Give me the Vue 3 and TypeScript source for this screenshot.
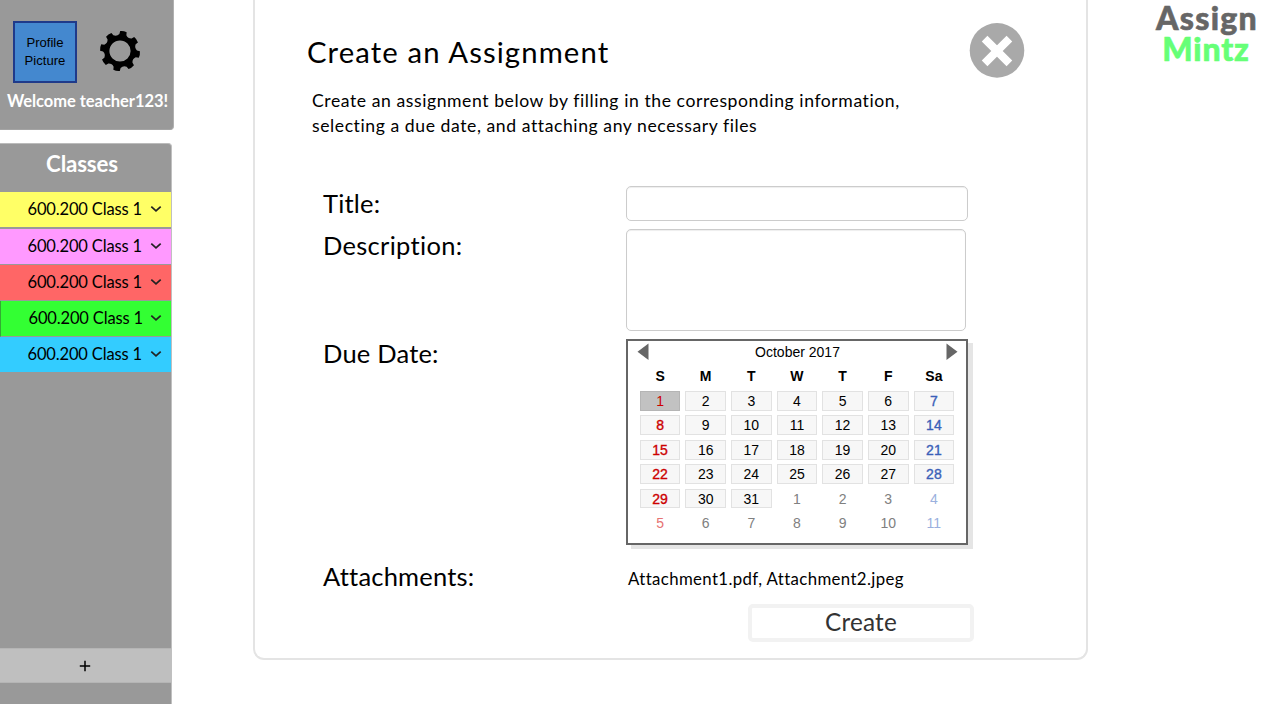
<script setup lang="ts">
interface ClassItem { name: string; tone: string }
interface Day { label: number; kind: string }

const classes: ClassItem[] = [
  { name: '600.200 Class 1', tone: 'yellow' },
  { name: '600.200 Class 1', tone: 'pink' },
  { name: '600.200 Class 1', tone: 'red' },
  { name: '600.200 Class 1', tone: 'green' },
  { name: '600.200 Class 1', tone: 'blue' },
]

const weekdays: string[] = ['S', 'M', 'T', 'W', 'T', 'F', 'Sa']

const days: Day[] = Array.from({ length: 42 }, (_, i) => {
  const inMonth = i < 31
  const col = i % 7
  const kinds: string[] = [inMonth ? 'current' : 'next']
  if (col === 0) kinds.push('sunday')
  if (col === 6) kinds.push('saturday')
  if (i === 0) kinds.push('selected')
  return { label: inMonth ? i + 1 : i - 30, kind: kinds.join(' ') }
})

// Gear outline: eight slightly flared teeth around a ring
const gearPath: string = (() => {
  const pts: string[] = []
  for (let i = 0; i < 8; i++) {
    const base = (i * 45 + 10) * (Math.PI / 180)
    const at = (r: number, deg: number) => {
      const a = base + deg * (Math.PI / 180)
      return `${(21 + r * Math.sin(a)).toFixed(2)} ${(21 - r * Math.cos(a)).toFixed(2)}`
    }
    pts.push(`${i ? 'L' : 'M'}${at(17, -12)} L${at(19.9, -9.5)} Q${at(20.6, 0)} ${at(19.9, 9.5)} L${at(17, 12)} Q${at(14.6, 22.5)} ${at(17, 33)}`)
  }
  return pts.join(' ') + ' Z M21 10.4 a10.6 10.6 0 1 0 0 21.2 a10.6 10.6 0 1 0 0 -21.2 Z'
})()
</script>

<template>
  <div class="page">
    <aside class="sidebar">
      <section class="profile">
        <div class="profile-top">
          <div class="avatar">Profile<br />Picture</div>
          <svg class="gear" viewBox="0 0 42 42"><path :d="gearPath" fill="#000" fill-rule="evenodd" /></svg>
        </div>
        <div class="welcome"><span>Welcome teacher123!</span></div>
      </section>
      <section class="classes">
        <h2>Classes</h2>
        <ul>
          <li v-for="(c, i) in classes" :key="i" :class="c.tone">
            <span>{{ c.name }}</span>
            <svg viewBox="0 0 12 8"><path d="M1.3 1.6 L6 5.9 L10.7 1.6" fill="none" stroke="#222" stroke-width="1.7" /></svg>
          </li>
        </ul>
        <button class="add" aria-label="Add class">
          <svg viewBox="0 0 12 12"><path d="M6 .8V11.2M.8 6H11.2" stroke="#000" stroke-width="1.5" /></svg>
        </button>
      </section>
    </aside>

    <main class="panel">
      <header>
        <h1>Create an Assignment</h1>
        <svg class="close" viewBox="0 0 56 56">
          <circle cx="28" cy="28.4" r="27.3" fill="#a9a9a9" />
          <path d="M15.6 16.6 L40.4 41.4 M40.4 16.6 L15.6 41.4" stroke="#fff" stroke-width="8" />
        </svg>
      </header>
      <div class="intro">
        <div class="line-a">Create an assignment below by filling in the corresponding information,</div>
        <div class="line-b">selecting a due date, and attaching any necessary files</div>
      </div>
      <form @submit.prevent>
        <label class="l-title">Title:</label>
        <input class="title-input" type="text" />
        <label class="l-desc">Description:</label>
        <textarea></textarea>
        <label class="l-due">Due Date:</label>
        <div class="calendar">
          <div class="month">
            <svg viewBox="0 0 12 18"><path d="M11.5 .5V17L.5 8.7Z" fill="#666" /></svg>
            <span>October 2017</span>
            <svg viewBox="0 0 12 18"><path d="M.5 .5V17L11.5 8.7Z" fill="#666" /></svg>
          </div>
          <div class="weekdays"><span v-for="(w, i) in weekdays" :key="i">{{ w }}</span></div>
          <div class="days"><span v-for="(d, i) in days" :key="i" :class="d.kind">{{ d.label }}</span></div>
        </div>
        <label class="l-att">Attachments:</label>
        <div class="files"><span>Attachment1.pdf, Attachment2.jpeg</span></div>
        <button class="create"><span>Create</span></button>
      </form>
    </main>

    <div class="logo">
      <div class="assign">Assign</div>
      <div class="mintz">Mintz</div>
    </div>
  </div>
</template>

<style>
html, body { overflow: hidden; background: #fff; }
</style>

<style scoped>
* { box-sizing: border-box; }
.page {
  display: flex;
  width: 1267px;
  height: 704px;
  font-family: Lato, "Open Sans", sans-serif;
  color: #000;
  white-space: nowrap;
}
.sidebar { width: 174px; margin-right: 79px; display: flex; flex-direction: column; gap: 13px; flex: none; }
.profile {
  height: 130px;
  padding: 21px 0 0 13px;
  background: #999;
  border-right: 1px solid #b0b0b0;
  border-bottom: 1px solid #a4a4a4;
  border-radius: 0 0 4px 0;
  flex: none;
}
.profile-top { display: flex; height: 62px; }
.avatar {
  width: 64px;
  height: 62px;
  border: 2px solid #1f3a8a;
  background: #4488cf;
  font: 13.1px/18px "Liberation Sans", Arial, sans-serif;
  text-align: center;
  padding-top: 11px;
}
.gear { width: 42px; height: 42px; margin: 9px 0 0 22px; }
.welcome { margin: 6px 0 0 -6px; font-size: 16.5px; line-height: 24px; font-weight: 700; color: #fff; letter-spacing: -0.05px; }
.classes { width: 172px; height: 561px; background: #999; border-right: 1px solid #c0c0c0; border-top: 1px solid #bbb; border-radius: 0 4px 0 0; display: flex; flex-direction: column; }
h2 { margin: 0; height: 48px; padding-right: 7px; text-align: center; color: #fff; font-size: 22.3px; line-height: 39px; font-weight: 700; letter-spacing: -0.15px; }
ul { list-style: none; margin: 0; padding: 0; }
li { height: 36px; border-bottom: 1px solid #999; display: flex; align-items: center; padding-left: 27.5px; font-size: 16.5px; letter-spacing: -0.15px; }
li span { width: 116px; margin-top: -1px; }
li svg { width: 12px; height: 8px; margin: -1px 0 0 6.5px; }
.yellow { background: #ff6; height: 37px; border-bottom-width: 2px; }
.pink { background: #f9f; }
.red { background: #f66; }
.green { background: #3f3; border-left: 1px solid #3a3; }
.green svg { margin-left: 5.5px; }
.blue { background: #3cf; height: 35px; border-bottom: 0; }
.add { margin: 276px 0 0; height: 35px; width: 171px; padding: 0 2px 0 0; border: 0; border-top: 1px solid #b5b5b5; border-bottom: 1px solid #b5b5b5; background: #bfbfbf; display: flex; align-items: center; justify-content: center; }
.add svg { width: 12px; height: 12px; }

.panel { width: 835px; height: 660px; flex: none; border: 2px solid #e4e4e4; border-top: 0; border-radius: 0 0 11px 11px; }
header { display: flex; justify-content: space-between; padding: 22px 61px 0 52px; height: 88px; }
h1 { margin: 8px 0 0; font-size: 29.3px; font-weight: 400; line-height: 44px; letter-spacing: 1.1px; }
.close { width: 56px; height: 56px; }
.intro { padding-left: 57px; font-size: 17.6px; line-height: 25px; height: 98px; letter-spacing: 0.57px; }
form { display: grid; grid-template-columns: 303px 348px; grid-template-rows: 43px 110px 224px 41px 38px; padding-left: 68px; }
label { font-size: 25.5px; line-height: 36px; letter-spacing: 0.2px; }
input, textarea { display: block; margin: 0; border: 1px solid #ccc; border-radius: 5px; background: #fff; box-shadow: inset 0 1px 1px #eee; resize: none; outline: 0; }
input { width: 342px; height: 35px; }
textarea { width: 340px; height: 102px; }
.l-title { margin-top: -1px; }
.l-desc { margin-top: -2px; letter-spacing: 0.3px; }
.l-due { margin-top: -4px; }
.l-att { margin-top: -5px; }
.calendar { width: 342px; height: 206px; border: 2px solid #666; background: #fff; box-shadow: 5px 4px 0 #e5e5e5; font-family: "Liberation Sans", Arial, sans-serif; font-size: 14px; }
.month { display: flex; justify-content: space-between; align-items: center; height: 22px; padding: 0 9px; }
.month svg { width: 12px; height: 18px; }
.month svg:last-child { margin-right: -1px; }
.weekdays, .days { display: grid; grid-template-columns: repeat(7, 40.5px); column-gap: 5.15px; margin-left: 11.8px; text-align: center; }
.weekdays { height: 28px; line-height: 27px; font-weight: 700; }
.days { grid-auto-rows: 19.8px; row-gap: 4.6px; line-height: 18px; }
.days span { border: 1px solid transparent; }
.days .current { background: #f7f7f7; border-color: #e2e2e2; }
.days .sunday { color: #c00; }
.days .saturday { color: #3a60b8; }
.days .current.sunday:not(.selected), .days .current.saturday { -webkit-text-stroke: 0.35px currentColor; }
.days .selected { background: #c2c2c2; border-color: #b5b5b5; }
.days .next { color: #808080; }
.days .next.sunday { color: #e67373; }
.days .next.saturday { color: #9ab0de; }
.files { padding-left: 2px; font-size: 16.8px; line-height: 38px; margin-top: -3px; letter-spacing: 0.38px; }
.create { grid-column: 2; justify-self: end; width: 226px; height: 38px; border: 4px solid #f2f2f2; border-radius: 5px; background: #fff; color: #333; font: 400 24.3px/28px Lato, sans-serif; letter-spacing: 0.2px; padding: 0 0 3px; }
.logo { margin-left: 66px; width: 104px; text-align: center; font-weight: 900; font-size: 32px; line-height: 31px; padding-top: 2px; }
.assign { color: #666; letter-spacing: 1.3px; margin-right: -2px; -webkit-text-stroke: 0.6px currentColor; }
.mintz { color: #6f7; letter-spacing: 0.8px; -webkit-text-stroke: 0.6px currentColor; }
</style>
